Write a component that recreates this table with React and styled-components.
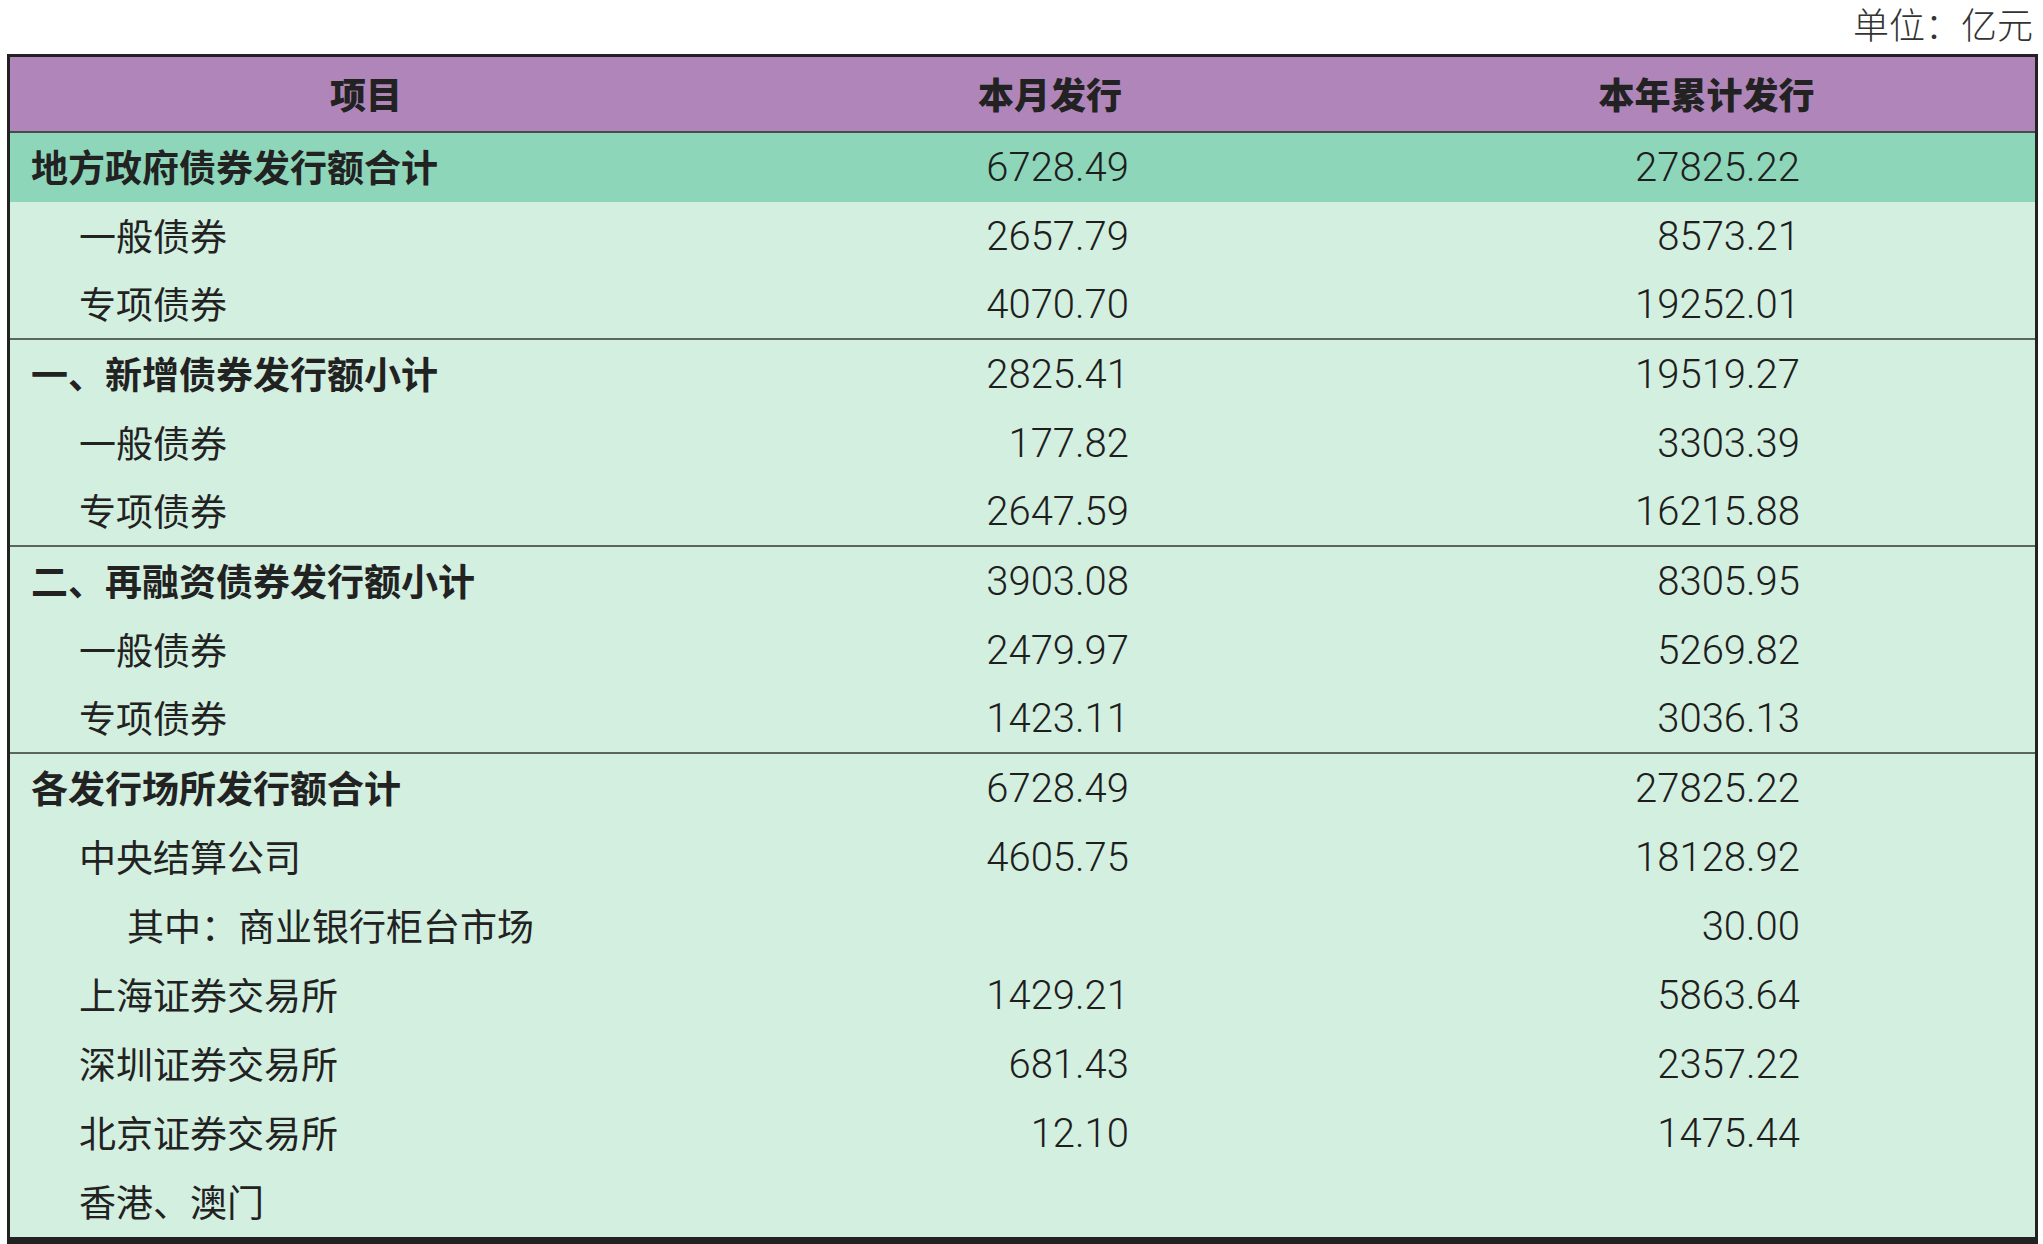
import React from 'react'
import styled, { createGlobalStyle } from 'styled-components'

const GlobalStyle = createGlobalStyle`
  body {
    margin: 0;
    background: #fff;
    font-family: "Noto Sans CJK SC", "Liberation Sans", sans-serif;
    color: #222;
  }
`

const Page = styled.div`
  width: 2043px;
`

const Unit = styled.div`
  height: 54px;
  padding-right: 10px;
  box-sizing: border-box;
  text-align: right;
  font-size: 36px;
  font-weight: 300;
  line-height: 46px;
  color: #333;
`

const Table = styled.div`
  margin: 0 5px 0 7px;
  border: 3px solid #222;
  border-bottom-width: 7px;
  background: #d3efdf;
`

const Row = styled.div`
  display: grid;
  grid-template-columns: 712px 656px 1fr;
  height: ${p => (p.$head ? 76 : 69)}px;
  box-sizing: border-box;
  align-items: center;
  background: ${p => (p.$head ? '#b086ba' : p.$hot ? '#8ed6ba' : '#d3efdf')};
  border-bottom: ${p => (p.$head ? '2px solid #4a4a4a' : p.$rule ? '2px solid #5b665f' : 'none')};
`

const HeadCell = styled.div`
  text-align: center;
  font-size: 36px;
  font-weight: 900;
  color: #222;
  padding-bottom: 2px;
`

const Label = styled.div`
  padding-left: ${p => [21, 69, 117][p.$level - 1]}px;
  padding-bottom: 3px;
  font-size: 37px;
  font-weight: ${p => (p.$level === 1 ? 700 : 400)};
  white-space: nowrap;
  color: #222;
`

const Num = styled.div`
  text-align: right;
  padding-right: ${p => p.$pad}px;
  font-family: Roboto, "Liberation Sans", sans-serif;
  font-size: 40px;
  font-weight: 300;
  color: #1e1e1e;
`

const rows = [
  { level: 1, label: '地方政府债券发行额合计', m: '6728.49', y: '27825.22', hot: true },
  { level: 2, label: '一般债券', m: '2657.79', y: '8573.21' },
  { level: 2, label: '专项债券', m: '4070.70', y: '19252.01', rule: true },
  { level: 1, label: '一、新增债券发行额小计', m: '2825.41', y: '19519.27' },
  { level: 2, label: '一般债券', m: '177.82', y: '3303.39' },
  { level: 2, label: '专项债券', m: '2647.59', y: '16215.88', rule: true },
  { level: 1, label: '二、再融资债券发行额小计', m: '3903.08', y: '8305.95' },
  { level: 2, label: '一般债券', m: '2479.97', y: '5269.82' },
  { level: 2, label: '专项债券', m: '1423.11', y: '3036.13', rule: true },
  { level: 1, label: '各发行场所发行额合计', m: '6728.49', y: '27825.22' },
  { level: 2, label: '中央结算公司', m: '4605.75', y: '18128.92' },
  { level: 3, label: '其中：商业银行柜台市场', m: '', y: '30.00' },
  { level: 2, label: '上海证券交易所', m: '1429.21', y: '5863.64' },
  { level: 2, label: '深圳证券交易所', m: '681.43', y: '2357.22' },
  { level: 2, label: '北京证券交易所', m: '12.10', y: '1475.44' },
  { level: 2, label: '香港、澳门', m: '', y: '' },
]

const App = () => {
  return (
    <Page>
      <GlobalStyle />
      <Unit>单位：亿元</Unit>
      <Table>
        <Row $head>
          <HeadCell>项目</HeadCell>
          <HeadCell>本月发行</HeadCell>
          <HeadCell>本年累计发行</HeadCell>
        </Row>
        {rows.map((r, i) => (
          <Row key={i} $hot={r.hot} $rule={r.rule}>
            <Label $level={r.level}>{r.label}</Label>
            <Num $pad={249}>{r.m}</Num>
            <Num $pad={235}>{r.y}</Num>
          </Row>
        ))}
      </Table>
    </Page>
  )
}

export default App
